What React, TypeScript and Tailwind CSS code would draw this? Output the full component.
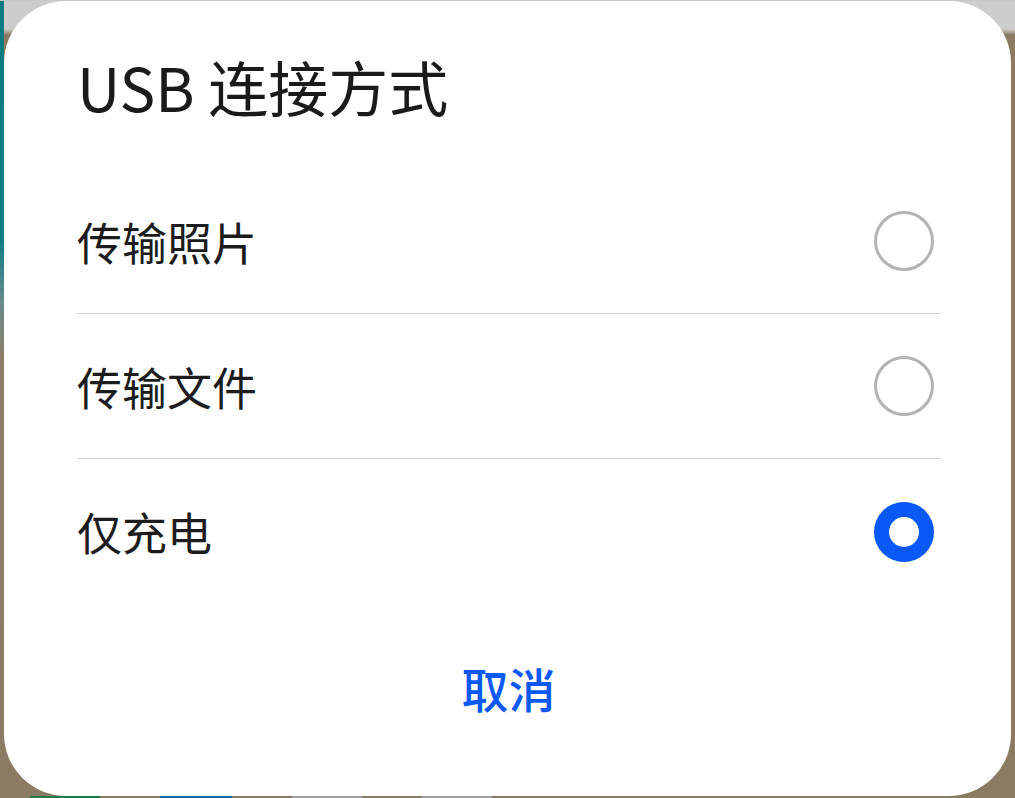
import { useState } from "react";

const options = ["传输照片", "传输文件", "仅充电"];

function Radio({ checked }: { checked: boolean }) {
  if (checked) {
    return (
      <span className="flex h-[60px] w-[60px] items-center justify-center rounded-full bg-[#0a59f7]">
        <span className="h-[30px] w-[30px] rounded-full bg-white" />
      </span>
    );
  }
  return <span className="h-[60px] w-[60px] rounded-full border-[3px] border-[#b3b3b3] bg-white" />;
}

export default function App() {
  const [selected, setSelected] = useState(2);

  return (
    <div
      className="flex h-[798px] w-[1015px] flex-col overflow-hidden bg-[#8b7b63]"
      style={{ fontFamily: '"Noto Sans CJK SC", "Noto Sans", Roboto, sans-serif' }}
    >
      {/* top edge of the screen behind the sheet */}
      <div className="h-[1px] bg-[#c9c9c9]" />

      <div className="flex flex-1 bg-[linear-gradient(to_bottom,#cdcdcd_0px,#cdcdcd_28px,#8b7b63_34px,#8b7b63_100%)]">
        <div className="w-[4px] bg-[linear-gradient(to_bottom,#0b7b84_0%,#0f7d86_30%,#6a8a8c_38%,#8e7e66_45%,#8b7b63_100%)]" />

        {/* dialog */}
        <div className="flex flex-1 flex-col rounded-[62px] bg-white pb-[84px] pl-[73px] pr-[71px] pt-[55px]">
          <h1 className="text-[60px] font-normal leading-none text-[#1a1a1a]">USB 连接方式</h1>

          <ul className="mt-[53px] flex flex-col">
            {options.map((label, i) => (
              <li
                key={label}
                onClick={() => setSelected(i)}
                className={
                  i < options.length - 1
                    ? "flex h-[145px] cursor-pointer items-center justify-between border-b border-[#d4d4d4] pr-[6px]"
                    : "flex h-[145px] cursor-pointer items-center justify-between pr-[6px]"
                }
              >
                <span className="text-[45px] leading-none text-[#1c1c1c]">{label}</span>
                <Radio checked={selected === i} />
              </li>
            ))}
          </ul>

          <button className="mt-[60px] self-center text-[47px] font-medium leading-none text-[#0a59f7]">
            取消
          </button>
        </div>

        <div className="w-[4px]" />
      </div>

      {/* bottom edge: dock icons peeking out */}
      <div className="flex h-[2px] bg-[#8b7b63]">
        <div className="ml-[30px] w-[70px] bg-[#1c7a45]" />
        <div className="ml-[60px] w-[72px] bg-[#1364a8]" />
        <div className="ml-[60px] w-[70px] bg-[#a0a0a0]" />
        <div className="ml-[60px] w-[70px] bg-[#a0a0a0]" />
      </div>
    </div>
  );
}
